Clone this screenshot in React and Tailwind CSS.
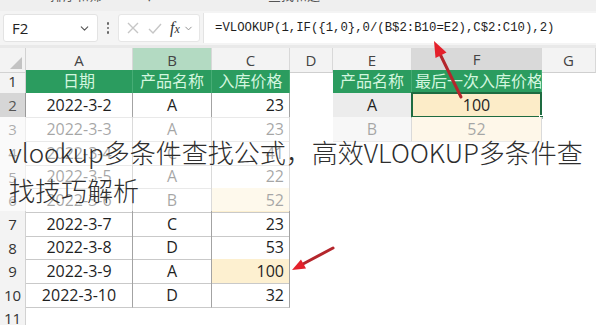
import { ChevronDown } from 'lucide-react';

const COLS = 'grid grid-cols-[26px_107px_79px_78px_43px_79px_130px_54px]';
const FONT = { fontFamily: '"Open Sans", "Noto Sans CJK SC", sans-serif' };

const rows = [
  ['2022-3-2', 'A', '23'],
  ['2022-3-3', 'A', '23'],
  ['2022-3-4', 'C', '41'],
  ['2022-3-5', 'A', '22'],
  ['2022-3-6', 'B', '52', true],
  ['2022-3-7', 'C', '23'],
  ['2022-3-8', 'D', '53'],
  ['2022-3-9', 'A', '100', true],
  ['2022-3-10', 'D', '32'],
];

const lookup = [
  ['A', '100'],
  ['B', '52'],
];

function RowHead({ n, active }) {
  return (
    <div
      className={`flex items-center justify-center border-r text-[15px] ${
        active ? 'bg-[#d6d6d6] border-[#9a9a9a] text-[#555]' : 'bg-[#f3f3f3] border-[#d2d2d2] text-[#333]'
      }`}
    >
      {n}
    </div>
  );
}

function Head({ children, className = '' }) {
  return (
    <div className={`flex items-center overflow-hidden whitespace-nowrap bg-[#2b9c5f] text-[#d3f6df] text-[16px] border-r border-[#46ad75] ${className}`}>
      {children}
    </div>
  );
}

function Cell({ children, className = '' }) {
  return (
    <div className={`flex items-center border-r border-b border-r-[#a3a3a3] border-b-[#c9c9c9] text-[16px] text-[#1f1f1f] ${className}`}>
      {children}
    </div>
  );
}

export default function App() {
  return (
    <div className="relative w-[596px] h-[325px] overflow-hidden bg-white" style={FONT}>
      {/* ribbon remnant */}
      <div className="h-[11px] bg-[#efefef] overflow-hidden flex text-[13px] text-[#555]">
        <span className="ml-[50px] -mt-[14px]">排序和筛</span>
        <span className="ml-[44px] -mt-[12px]">▾</span>
        <span className="ml-[115px] -mt-[14px]">查找和选</span>
      </div>

      {/* formula bar */}
      <div className="h-[34px] bg-[#f4f4f4] flex items-center">
        <div className="ml-[3px] w-[95px] h-[28px] bg-white border border-[#e3e3e3] rounded-[3px] flex items-center justify-between pl-[8px] pr-[6px] text-[15px] text-[#222]">
          F2
          <ChevronDown size={13} className="text-[#555]" strokeWidth={2} />
        </div>
        <div className="w-[20px] flex flex-col items-center gap-[2px]">
          <span className="w-[2.5px] h-[2.5px] rounded-full bg-[#666]" />
          <span className="w-[2.5px] h-[2.5px] rounded-full bg-[#666]" />
          <span className="w-[2.5px] h-[2.5px] rounded-full bg-[#666]" />
        </div>
        <div className="w-[82px] h-[28px] bg-white border border-[#e6e6e6] rounded-[3px] flex items-center text-[#c4c4c4]">
          <svg width="12" height="12" viewBox="0 0 12 12" className="ml-[8px]" stroke="#c6c6c6" strokeWidth="1.4" fill="none">
            <path d="M1 1l10 10M11 1L1 11" />
          </svg>
          <svg width="14" height="11" viewBox="0 0 14 11" className="ml-[9px]" stroke="#c6c6c6" strokeWidth="1.4" fill="none">
            <path d="M1 6l4 4 8-9" />
          </svg>
          <span className="ml-[8px] text-[16px] italic text-[#333]" style={{ fontFamily: '"Liberation Serif", serif' }}>
            f<span className="text-[12px]">x</span>
          </span>
          <ChevronDown size={11} className="ml-[3px] text-[#888]" />
        </div>
        <div className="flex-1 h-[30px] ml-[3px] bg-white border-l border-[#e3e3e3] flex items-center pl-[11px] text-[12.3px] text-[#1e1e1e] whitespace-nowrap" style={{ fontFamily: '"Liberation Mono", monospace' }}>
          =VLOOKUP(1,IF(&#123;1,0&#125;,0/(B$2:B10=E2),C$2:C10),2)
        </div>
      </div>
      <div className="h-[3px] bg-[#e9e9e9]" />

      {/* column headers */}
      <div className={`${COLS} h-[21.5px] text-[15px] text-[#444]`}>
        <div className="relative bg-[#f3f3f3] border-r border-b border-[#d2d2d2]">
          <div className="absolute right-[3px] bottom-[3px] w-0 h-0 border-l-[12px] border-l-transparent border-b-[12px] border-b-[#c3c3c3]" />
        </div>
        {['A', 'B', 'C', 'D', 'E', 'F', 'G'].map((c) => (
          <div
            key={c}
            className={`flex items-center justify-center border-r border-r-[#d8d8d8] ${
              c === 'B'
                ? 'bg-[#b3dac2] border-b border-b-[#9fcbb0]'
                : c === 'F'
                ? 'bg-[#d9d9d9] border-b-2 border-b-[#1f7145]'
                : 'bg-[#f3f3f3] border-b border-b-[#cfcfcf]'
            }`}
          >
            {c}
          </div>
        ))}
      </div>

      {/* row 1 */}
      <div className={`${COLS} h-[23.7px]`}>
        <RowHead n={1} />
        <Head className="justify-center">日期</Head>
        <Head className="justify-center">产品名称</Head>
        <Head className="justify-center">入库价格</Head>
        <div />
        <Head className="justify-center">产品名称</Head>
        <Head className="pl-[3px]">最后一次入库价格</Head>
        <div />
      </div>

      {/* rows 2-10 */}
      {rows.map(([d, p, v, hl], i) => {
        const r = i + 2;
        const lk = lookup[i];
        return (
          <div key={r} className={`${COLS} h-[23.7px]`}>
            <RowHead n={r} active={r === 2} />
            <Cell className="justify-center">{d}</Cell>
            <Cell className="justify-center">{p}</Cell>
            <Cell className={`justify-end pr-[5px] ${hl ? 'bg-[#fdf0d0]' : ''}`}>{v}</Cell>
            <div />
            {lk ? (
              <>
                <Cell className="justify-center bg-[#ececec]">{lk[0]}</Cell>
                <Cell className="relative justify-center bg-[#fcecc8]">
                  {lk[1]}
                  {r === 2 && (
                    <>
                      <div className="absolute -left-[1px] -top-[1px] -right-[1px] -bottom-[1px] border-2 border-[#1e6b40]" />
                      <div className="absolute -right-[3px] -bottom-[3px] w-[5px] h-[5px] bg-[#1e6b40] border border-white" />
                    </>
                  )}
                </Cell>
              </>
            ) : (
              <>
                <div />
                <div />
              </>
            )}
            <div />
          </div>
        );
      })}

      {/* row 11 */}
      <div className={`${COLS} h-[23.7px]`}>
        <RowHead n={11} />
      </div>

      {/* title overlay */}
      <div className="absolute left-0 right-0 top-[117px] h-[94px] bg-white/60" />
      <div
        className="absolute left-[9px] top-[133px] text-[26px] leading-[38px] text-[#2e2e2e] font-light whitespace-nowrap"
        style={{ fontFamily: '"Noto Sans CJK SC", "Noto Sans", sans-serif' }}
      >
        vlookup多条件查找公式，高效VLOOKUP多条件查
        <br />
        找技巧解析
      </div>

      {/* arrows */}
      <svg className="absolute left-0 top-0 pointer-events-none" width="596" height="325">
        <line x1="461" y1="97" x2="440" y2="54" stroke="#b4262c" strokeWidth="3" strokeLinecap="round" />
        <polygon points="434,41 446.5,52.5 435.5,58" fill="#e4202b" />
        <line x1="333" y1="248" x2="302" y2="264.5" stroke="#b4262c" strokeWidth="3" strokeLinecap="round" />
        <polygon points="292,270 306,268.5 301,259.5" fill="#e4202b" />
      </svg>
    </div>
  );
}
